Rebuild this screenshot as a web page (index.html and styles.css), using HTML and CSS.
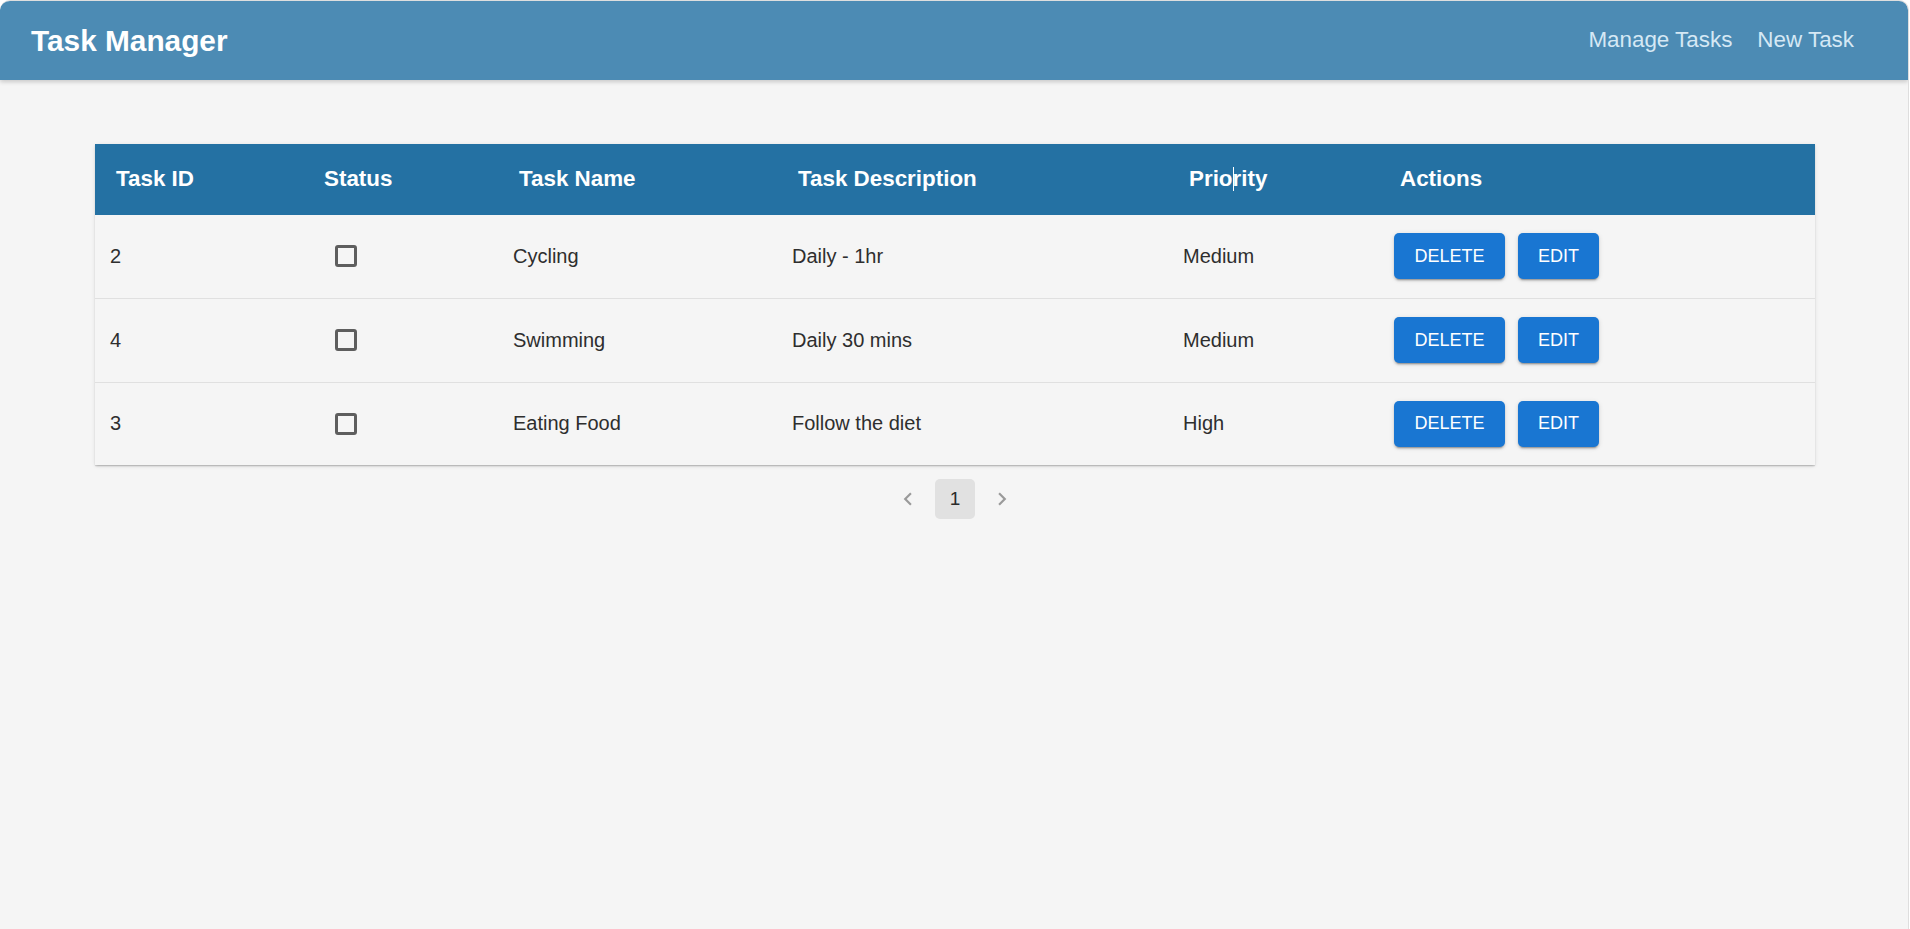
FILE: index.html
```html
<!DOCTYPE html>
<html lang="en">
<head>
<meta charset="utf-8">
<title>Task Manager</title>
<link rel="stylesheet" href="styles.css">
</head>
<body>
<div class="app">
  <header class="topbar">
    <div class="brand">Task Manager</div>
    <nav class="nav">
      <a class="nav-link" href="#">Manage Tasks</a>
      <a class="nav-link" href="#">New Task</a>
    </nav>
  </header>
  <main class="content">
    <div class="paper">
      <table class="tasks">
        <colgroup>
          <col class="c1"><col class="c2"><col class="c3"><col class="c4"><col class="c5"><col class="c6">
        </colgroup>
        <thead>
          <tr>
            <th>Task ID</th>
            <th>Status</th>
            <th>Task Name</th>
            <th>Task Description</th>
            <th>Prio<span class="caret"></span>rity</th>
            <th>Actions</th>
          </tr>
        </thead>
        <tbody>
          <tr>
            <td>2</td>
            <td><span class="checkbox"></span></td>
            <td>Cycling</td>
            <td>Daily - 1hr</td>
            <td>Medium</td>
            <td><div class="actions"><button class="btn btn-delete">Delete</button><button class="btn btn-edit">Edit</button></div></td>
          </tr>
          <tr>
            <td>4</td>
            <td><span class="checkbox"></span></td>
            <td>Swimming</td>
            <td>Daily 30 mins</td>
            <td>Medium</td>
            <td><div class="actions"><button class="btn btn-delete">Delete</button><button class="btn btn-edit">Edit</button></div></td>
          </tr>
          <tr>
            <td>3</td>
            <td><span class="checkbox"></span></td>
            <td>Eating Food</td>
            <td>Follow the diet</td>
            <td>High</td>
            <td><div class="actions"><button class="btn btn-delete">Delete</button><button class="btn btn-edit">Edit</button></div></td>
          </tr>
        </tbody>
      </table>
    </div>
    <div class="pagination">
      <span class="page-item arrow">
        <svg viewBox="0 0 24 24" width="26" height="26"><path d="M15.41 7.41 14 6l-6 6 6 6 1.41-1.41L10.83 12z" fill="currentColor"/></svg>
      </span>
      <span class="page-item current">1</span>
      <span class="page-item arrow">
        <svg viewBox="0 0 24 24" width="26" height="26"><path d="M10 6 8.59 7.41 13.17 12l-4.58 4.59L10 18l6-6z" fill="currentColor"/></svg>
      </span>
    </div>
  </main>
</div>
</body>
</html>
```
FILE: styles.css
```css
* { box-sizing: border-box; }

html, body {
  margin: 0;
  padding: 0;
  background: #ffffff;
}

body {
  font-family: "Liberation Sans", Arial, sans-serif;
  color: #2b2b2b;
}

.app {
  width: 1909px;
  height: 929px;
  background: #f5f5f5;
  border: 1px solid #dedede;
  border-bottom: none;
  border-left: none;
  border-radius: 10px 10px 0 0;
  overflow: hidden;
}

.topbar {
  height: 80px;
  background: #4c8bb4;
  display: flex;
  align-items: center;
  justify-content: space-between;
  padding: 0 54px 0 31px;
  border-radius: 10px 10px 0 0;
  box-shadow: 0 2px 4px rgba(0, 0, 0, 0.18);
  margin-top: -1px;
}

.brand {
  color: #ffffff;
  font-size: 29.8px;
  font-weight: bold;
  padding-top: 1px;
}

.nav {
  display: flex;
  gap: 25px;
}

.nav-link {
  color: #d5e8f4;
  font-size: 22.4px;
  text-decoration: none;
}

.content {
  padding-top: 64px;
}

.paper {
  width: 1720px;
  margin-left: 95px;
  background: #f5f5f5;
  box-shadow: 0 2px 2px -1px rgba(0, 0, 0, 0.14), 0 1px 1px 0 rgba(0, 0, 0, 0.1), 0 1px 4px 0 rgba(0, 0, 0, 0.1);
}

.tasks {
  width: 100%;
  border-collapse: collapse;
  table-layout: fixed;
}

.c1 { width: 208px; }
.c2 { width: 195px; }
.c3 { width: 279px; }
.c4 { width: 391px; }
.c5 { width: 211px; }
.c6 { width: 436px; }

.tasks th {
  background: #2471a3;
  color: #ffffff;
  font-size: 22.4px;
  font-weight: bold;
  text-align: left;
  height: 71px;
  padding: 0 0 1px 21px;
}

.caret {
  display: inline-block;
  width: 1px;
  height: 24px;
  background: #ffffff;
  vertical-align: -5px;
  margin-right: -1px;
}

.tasks td {
  font-size: 20px;
  color: #2e2e2e;
  height: 83px;
  padding: 0 0 0 15px;
  border-bottom: 1px solid #e0e0e0;
  vertical-align: middle;
}

.tasks tbody tr:nth-child(2) td {
  height: 84px;
}

.tasks tbody tr:last-child td {
  border-bottom: none;
  height: 83px;
}

.checkbox {
  display: block;
  width: 22px;
  height: 22px;
  margin-left: 17px;
  border: 3px solid #5e5e5e;
  border-radius: 3px;
}

.actions {
  display: flex;
  gap: 13px;
}

.btn {
  height: 46px;
  padding: 0 20px;
  border: none;
  border-radius: 5px;
  background: #1976d2;
  color: #ffffff;
  font-family: "Liberation Sans", Arial, sans-serif;
  font-size: 18px;
  text-transform: uppercase;
  box-shadow: 0 3px 1px -2px rgba(0, 0, 0, 0.2), 0 2px 2px 0 rgba(0, 0, 0, 0.14), 0 1px 5px 0 rgba(0, 0, 0, 0.12);
  cursor: pointer;
}

.btn-delete { width: 111px; }
.btn-edit { width: 81px; }

.pagination {
  display: flex;
  justify-content: center;
  gap: 7px;
  margin-top: 14px;
  margin-left: 95px;
  width: 1720px;
}

.page-item {
  width: 40px;
  height: 40px;
  display: flex;
  align-items: center;
  justify-content: center;
  border-radius: 5px;
  font-size: 19px;
}

.page-item.arrow {
  color: #9a9a9a;
}

.page-item.current {
  background: #e1e1e1;
  color: #2b2b2b;
}
```
